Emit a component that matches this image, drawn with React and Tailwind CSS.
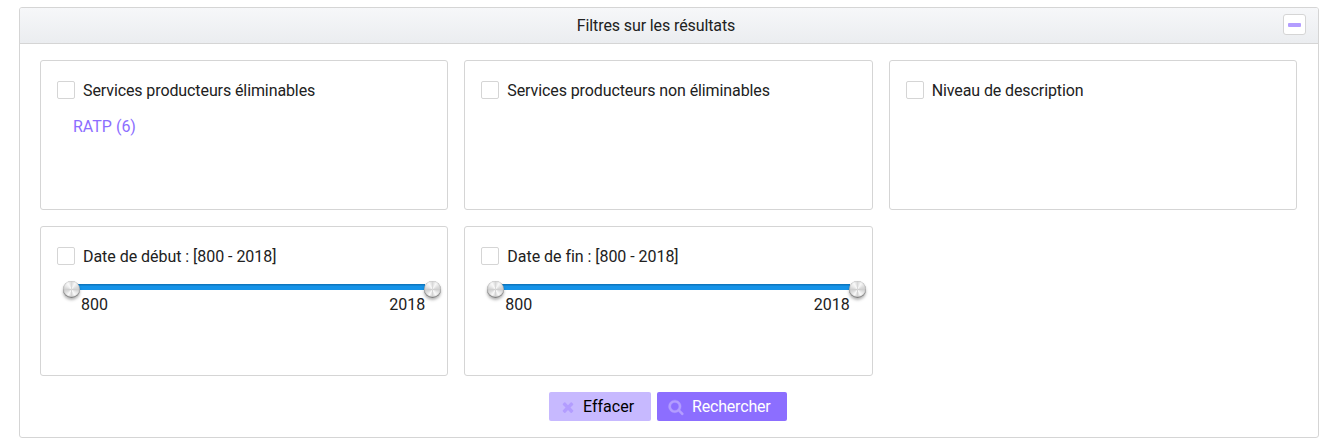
import React from "react";

function TimesIcon({ className }) {
  return (
    <svg viewBox="0 0 1792 1792" fill="currentColor" className={className} aria-hidden="true">
      <path d="M1490 1322q0 40-28 68l-136 136q-28 28-68 28t-68-28l-294-294-294 294q-28 28-68 28t-68-28l-136-136q-28-28-28-68t28-68l294-294-294-294q-28-28-28-68t28-68l136-136q28-28 68-28t68 28l294 294 294-294q28-28 68-28t68 28l136 136q28 28 28 68t-28 68l-294 294 294 294q28 28 28 68z" />
    </svg>
  );
}

function SearchIcon({ className }) {
  return (
    <svg
      viewBox="0 0 1792 1792"
      fill="currentColor"
      stroke="currentColor"
      strokeWidth="40"
      className={className}
      aria-hidden="true"
    >
      <path d="M1216 832q0-185-131.5-316.5t-316.5-131.5-316.5 131.5-131.5 316.5 131.5 316.5 316.5 131.5 316.5-131.5 131.5-316.5zm512 832q0 52-38 90t-90 38q-54 0-90-38l-343-342q-179 124-399 124-143 0-273.5-55.5t-225-150-150-225-55.5-273.5 55.5-273.5 150-225 225-150 273.5-55.5 273.5 55.5 225 150 150 225 55.5 273.5q0 220-124 399l343 343q37 37 37 90z" />
    </svg>
  );
}

function FilterCard({ label, labelClassName = "tracking-[-0.1px]", children }) {
  return (
    <section className="h-[150px] rounded-[3px] border border-[#d5d5d5] px-4 pt-[17px]">
      <label className="flex h-[25px] items-end gap-2">
        <input
          type="checkbox"
          className="mb-[4px] size-[18px] shrink-0 appearance-none rounded-[2px] border border-[#d5d5d5] bg-white"
        />
        <span className={labelClassName}>{label}</span>
      </label>
      {children}
    </section>
  );
}

// Brushed-metal slider knob, centred on its end of the track.
function Knob({ className }) {
  return (
    <span
      className={`absolute -top-[3px] size-[17px] rounded-full bg-[conic-gradient(from_0deg,#d8d8d8,#f8f8f8_30deg,#dcdcdc_65deg,#cfcfcf_90deg,#e8e8e8_120deg,#fafafa_150deg,#d4d4d4_180deg,#fafafa_210deg,#dcdcdc_245deg,#cfcfcf_270deg,#e8e8e8_300deg,#fafafa_330deg,#d8d8d8)] shadow-[0_2px_3px_rgba(0,0,0,0.3),inset_0_-1px_1px_#777,inset_0_0_1px_#888] ${className}`}
    />
  );
}

function RangeSlider({ min, max }) {
  return (
    <div className="relative -mr-[9px] mt-[15px] px-[15px]">
      <div className="h-[6px] bg-linear-to-b from-[#0c6fb4] via-[#1593e8] via-40% to-[#1593e8]" />
      <Knob className="left-[6px]" />
      <Knob className="right-[-1px]" />
      <div className="mt-[3px] flex justify-between pl-[9px]">
        <span>{min}</span>
        <span>{max}</span>
      </div>
    </div>
  );
}

export default function App() {
  return (
    <main className="bg-white px-[19px] pt-[7px] font-['Roboto',sans-serif] text-base leading-6 text-[#212121]">
      <div className="h-[431px] rounded-[3px] border border-[#d5d5d5]">
        <header className="flex h-9 items-center rounded-t-[2px] border-b border-[#d5d5d5] bg-linear-to-b from-[#f6f7f9] to-[#ebedf0] pr-3">
          <h2 className="flex-1 pl-[9px] text-center tracking-[-0.11px]">Filtres sur les résultats</h2>
          <button
            type="button"
            aria-label="Réduire"
            className="mb-0.5 flex h-[21px] w-[23px] items-center justify-center rounded-[3px] border border-[#d5d5d5] bg-white"
          >
            <span className="h-1 w-[13px] rounded-[1px] bg-[#b39dff]" />
          </button>
        </header>

        <div className="grid grid-cols-3 gap-4 pl-5 pr-[21px] pt-4">
          <FilterCard label="Services producteurs éliminables">
            <a href="#ratp" className="ml-4 mt-3 block text-[#8c6eff]">
              RATP (6)
            </a>
          </FilterCard>
          <FilterCard label="Services producteurs non éliminables" />
          <FilterCard label="Niveau de description" />
          <FilterCard label="Date de début : [800 - 2018]" labelClassName="tracking-[-0.04px]">
            <RangeSlider min={800} max={2018} />
          </FilterCard>
          <FilterCard label="Date de fin : [800 - 2018]" labelClassName="tracking-[-0.04px]">
            <RangeSlider min={800} max={2018} />
          </FilterCard>
        </div>

        <div className="flex justify-center gap-[6px] pr-0.5 pt-4">
          <button
            type="button"
            className="flex h-[29px] w-[102px] items-center rounded-[2px] bg-[#c7b9ff] pl-[11px] text-black"
          >
            <TimesIcon className="mr-[7px] mt-px size-4 text-[#b39dff]" />
            Effacer
          </button>
          <button
            type="button"
            className="flex h-[29px] w-[130px] items-center rounded-[2px] bg-[#8c6eff] pl-[11px] tracking-[-0.18px] text-white"
          >
            <SearchIcon className="mr-2 mt-px size-4 overflow-visible text-[#b39dff]" />
            Rechercher
          </button>
        </div>
      </div>
    </main>
  );
}
